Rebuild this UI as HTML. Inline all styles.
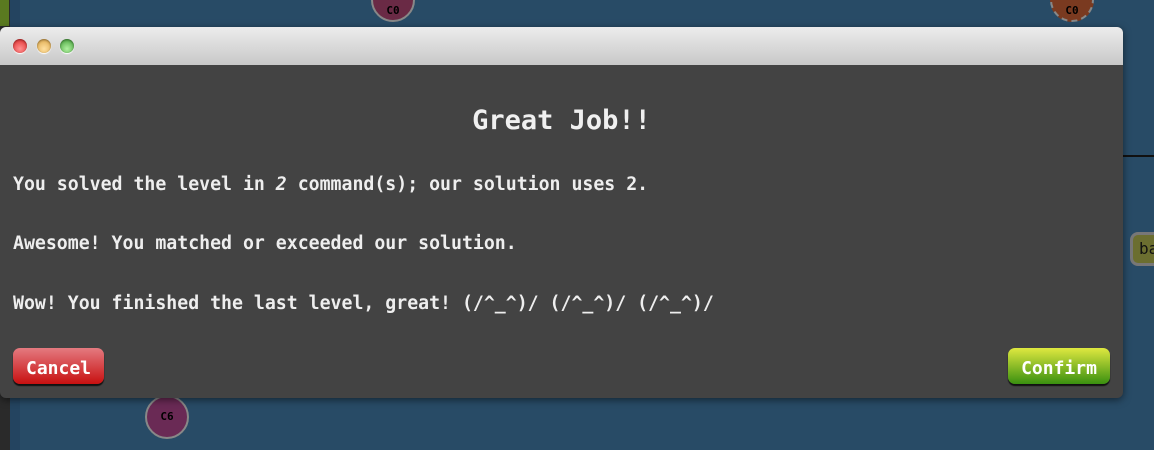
<!DOCTYPE html>
<html><head><style>
html,body{margin:0;padding:0;width:1154px;height:450px;overflow:hidden;background:#284b66;font-family:"DejaVu Sans Mono","Liberation Mono",monospace;}
.strip{position:absolute;left:0;top:0;width:10px;height:450px;background:#2a2a2a;}
.strip3{position:absolute;left:10px;top:0;width:10px;height:450px;background:#244460;}
.strip2{position:absolute;left:0;top:0;width:9px;height:26px;background:#5a7a20;}
.node{position:absolute;border-radius:50%;border:2px solid #888;font-size:11px;font-weight:bold;color:#000;text-align:center;}
.dlg{position:absolute;left:0;top:27px;width:1123px;height:371px;background:#434343;border-radius:6px;box-shadow:0 2px 8px rgba(0,0,0,.5);overflow:hidden;}
.tb{height:38px;background:linear-gradient(#ececec,#c8c8c8);}
.dot{position:absolute;top:12px;width:14px;height:14px;border-radius:50%;box-shadow:0 1px 1px #fff,inset 0 1px 2px rgba(0,0,0,.4);}
h1{position:absolute;left:0;right:0;top:78px;margin:0;text-align:center;color:#f0f0f0;font-size:27px;font-weight:bold;}
.p{position:absolute;left:13px;color:#eee;font-size:18.2px;font-weight:bold;white-space:pre;}
.btn{position:absolute;top:321px;height:36px;border-radius:7px;color:#fff;font-size:18px;font-weight:bold;text-align:center;line-height:42px;box-shadow:0 2px 1px #111;}
</style></head><body>
<div class="strip"></div><div class="strip3"></div><div class="strip2"></div>
<div class="node" style="left:371px;top:-22px;width:40px;height:40px;background:#6a2a45;line-height:62px">C0</div>
<div class="node" style="left:1050px;top:-22px;width:40px;height:40px;background:#7a3a20;border-style:dashed;line-height:62px">C0</div>
<div class="node" style="left:145px;top:395px;width:40px;height:40px;background:#6a2a55;line-height:40px">C6</div>
<div style="position:absolute;left:1123px;top:155px;width:31px;height:2px;background:#111"></div>
<div style="position:absolute;left:1130px;top:232px;width:40px;height:34px;border-radius:8px;background:#6b6e30;border:3px solid #777;box-sizing:border-box;font-size:16px;color:#111;line-height:28px;padding-left:6px">ba</div>
<div class="dlg">
<div class="tb"></div>
<div class="dot" style="left:13px;background:radial-gradient(circle at 50% 70%,#ff9090,#d22)"></div>
<div class="dot" style="left:37px;background:radial-gradient(circle at 50% 70%,#ffe0a0,#d9a040)"></div>
<div class="dot" style="left:60px;background:radial-gradient(circle at 50% 70%,#b0f0a0,#3a9a30)"></div>
<h1>Great Job!!</h1>
<div class="p" style="top:147px">You solved the level in <i>2</i> command(s); our solution uses 2.</div>
<div class="p" style="top:206px">Awesome! You matched or exceeded our solution.</div>
<div class="p" style="top:266px">Wow! You finished the last level, great! (/^_^)/ (/^_^)/ (/^_^)/</div>
<div class="btn" style="left:13px;width:91px;background:linear-gradient(#e47a80,#c81010)">Cancel</div>
<div class="btn" style="left:1008px;width:102px;background:linear-gradient(#dfe840,#3a9010)">Confirm</div>
</div>
</body></html>
